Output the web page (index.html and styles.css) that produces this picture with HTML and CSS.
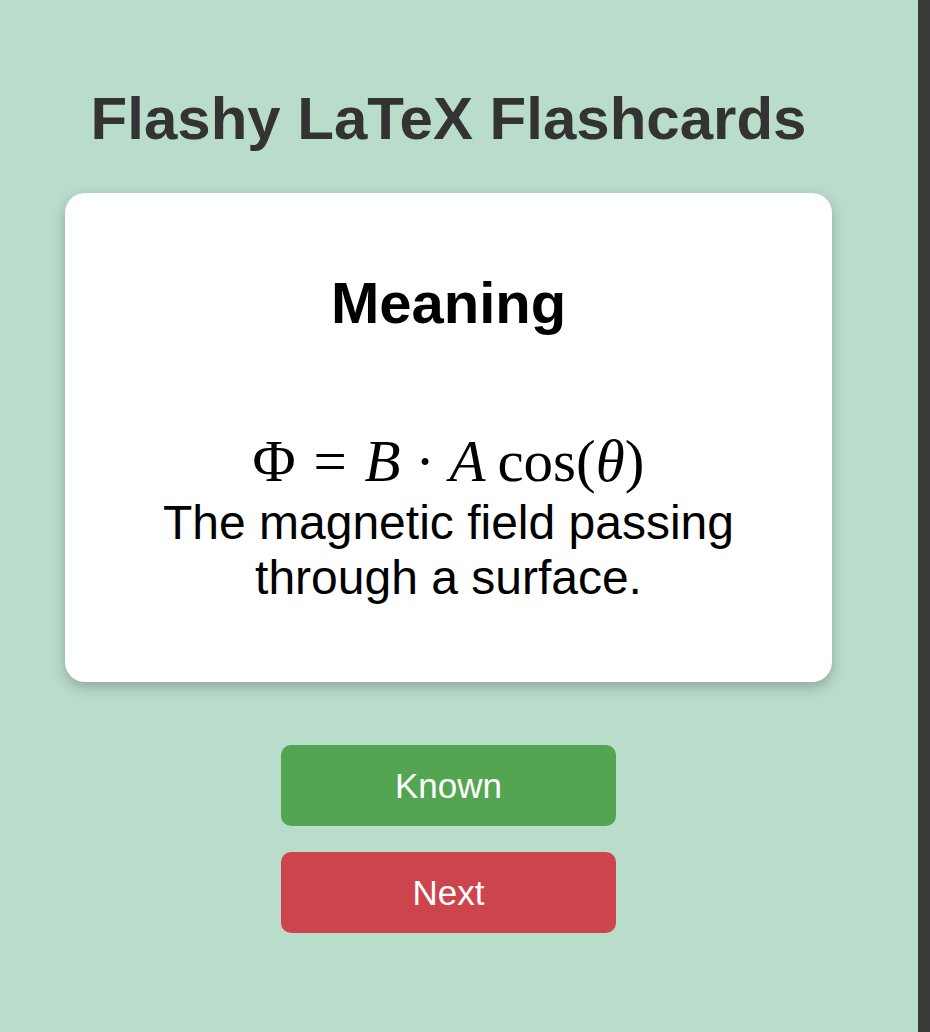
FILE: index.html
```html
<!DOCTYPE html>
<html lang="en">
<head>
<meta charset="utf-8">
<title>Flashy LaTeX Flashcards</title>
<link rel="stylesheet" href="styles.css">
</head>
<body>
<div class="page">
  <main class="main">
    <h1 class="title">Flashy LaTeX Flashcards</h1>
    <section class="card">
      <h2 class="card-heading">Meaning</h2>
      <div class="formula"><span class="up">Φ</span><span class="rel">=</span><span class="it">B</span><span class="bin">·</span><span class="it">A</span><span class="op">cos</span><span class="up">(</span><span class="it theta">θ</span><span class="up">)</span></div>
      <p class="desc">The magnetic field passing through a surface.</p>
    </section>
    <div class="actions">
      <button class="btn btn-known" type="button">Known</button>
      <button class="btn btn-next" type="button">Next</button>
    </div>
  </main>
  <div class="gutter"></div>
  <div class="edge"></div>
</div>
</body>
</html>
```

FILE: styles.css
```css
html, body {
  margin: 0;
  padding: 0;
}

body {
  background: #badccb;
  font-family: "Liberation Sans", Arial, Helvetica, sans-serif;
}

.page {
  display: flex;
  min-height: 100vh;
}

.main {
  width: 897px;
  display: flex;
  flex-direction: column;
  align-items: center;
}

.gutter {
  flex: 1;
}

.edge {
  width: 12px;
  background: #3a3a3a;
}

.title {
  margin: 84px 0 0;
  font-size: 60px;
  line-height: 69px;
  font-weight: 700;
  color: #333333;
}

.card {
  box-sizing: border-box;
  margin-top: 40px;
  width: 767px;
  height: 489px;
  padding: 76px 40px 0;
  background: #ffffff;
  border-radius: 20px;
  box-shadow: 0 5px 14px rgba(0, 0, 0, 0.24);
  text-align: center;
}

.card-heading {
  margin: 0;
  font-size: 58px;
  line-height: 67px;
  font-weight: 700;
  color: #000000;
}

.formula {
  margin-top: 92px;
  font-family: "Liberation Serif", "Times New Roman", serif;
  font-size: 59px;
  line-height: 67px;
  color: #000000;
  white-space: nowrap;
}

.formula .it {
  font-style: italic;
}

.formula .rel {
  margin: 0 0.3em;
}

.formula .bin {
  margin: 0 0.25em;
}

.formula .op {
  margin-left: 0.2em;
}

.desc {
  margin: 0;
  font-size: 48px;
  line-height: 55px;
  color: #000000;
}

.actions {
  margin-top: 63px;
  display: flex;
  flex-direction: column;
  gap: 26px;
}

.btn {
  width: 335px;
  height: 81px;
  border: none;
  border-radius: 10px;
  font-family: "Liberation Sans", Arial, Helvetica, sans-serif;
  font-size: 35px;
  color: #ffffff;
  padding: 0;
  cursor: pointer;
}

.btn-known {
  background: #53a552;
}

.btn-next {
  background: #cc444c;
}
```
